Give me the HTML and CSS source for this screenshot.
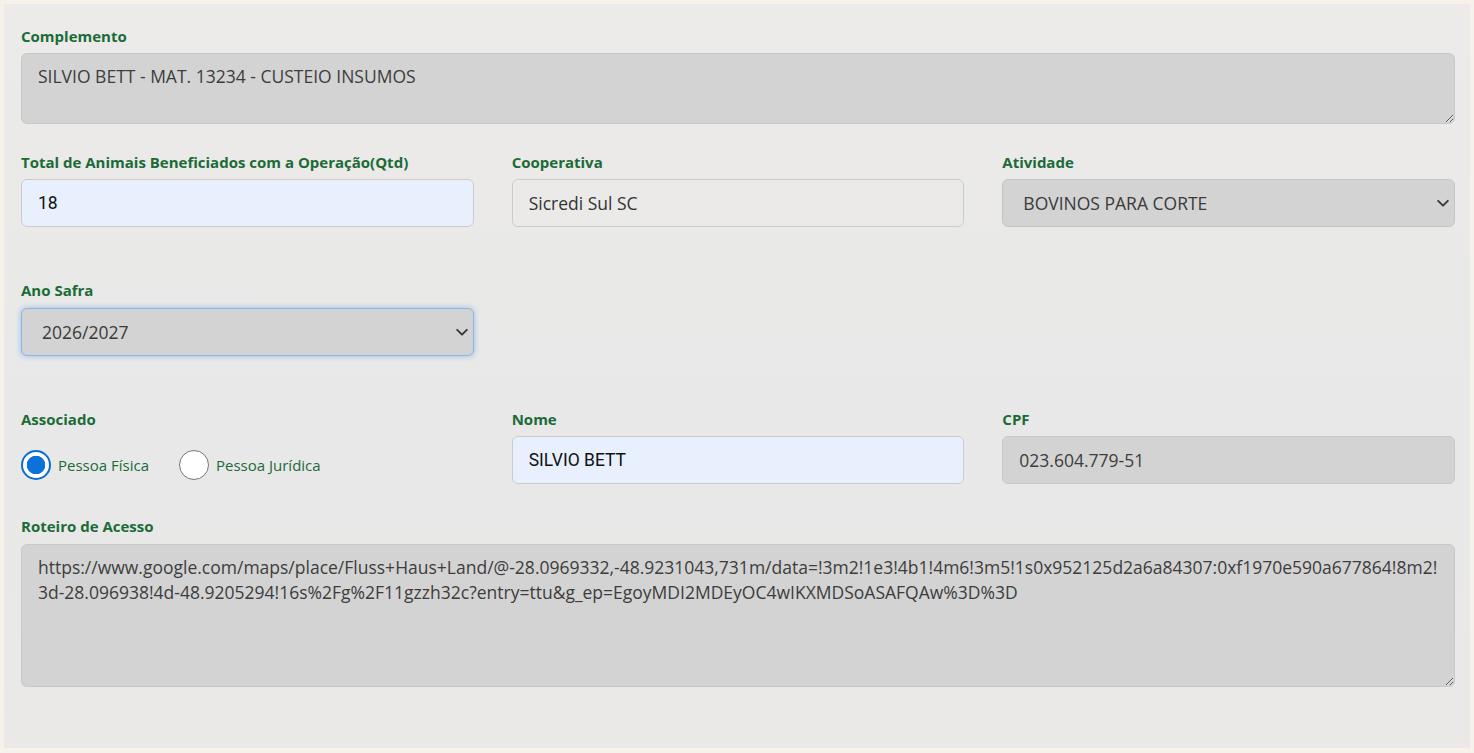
FILE: index.html
```html
<!DOCTYPE html>
<html lang="pt-BR">
  <head>
    <meta charset="UTF-8" />
    <meta name="viewport" content="width=device-width, initial-scale=1.0" />
    <title>Operação</title>
    <link rel="stylesheet" href="styles.css">
  </head>
  <body>
    <div class="panel">
      <div class="group group-complemento">
        <label class="field-label" for="complemento">Complemento</label>
        <textarea id="complemento" class="form-control readonly area-sm" readonly>SILVIO BETT - MAT. 13234 - CUSTEIO INSUMOS</textarea>
      </div>

      <div class="row row-gap-lg">
        <div class="group">
          <label class="field-label" for="animais">Total de Animais Beneficiados com a Operação(Qtd)</label>
          <input type="text" id="animais" class="form-control autofill" value="18" />
        </div>
        <div class="group">
          <label class="field-label" for="cooperativa">Cooperativa</label>
          <input type="text" id="cooperativa" class="form-control" value="Sicredi Sul SC" />
        </div>
        <div class="group">
          <label class="field-label" for="atividade">Atividade</label>
          <div class="select-wrap">
            <select id="atividade" class="form-select">
              <option>BOVINOS PARA CORTE</option>
            </select>
            <svg class="chevron" viewBox="0 0 16 16" width="14" height="14"><path d="M2.5 5.5 8 11l5.5-5.5" fill="none" stroke="#343a40" stroke-width="2.2" stroke-linecap="round" stroke-linejoin="round"/></svg>
          </div>
        </div>
      </div>

      <div class="row row-gap-lg">
        <div class="group">
          <label class="field-label label-safra" for="safra">Ano Safra</label>
          <div class="select-wrap">
            <select id="safra" class="form-select focused">
              <option>2026/2027</option>
            </select>
            <svg class="chevron" viewBox="0 0 16 16" width="14" height="14"><path d="M2.5 5.5 8 11l5.5-5.5" fill="none" stroke="#343a40" stroke-width="2.2" stroke-linecap="round" stroke-linejoin="round"/></svg>
          </div>
        </div>
      </div>

      <div class="row row-gap-md">
        <div class="group">
          <span class="field-label">Associado</span>
          <div class="radios">
            <label class="radio">
              <span class="radio-dot checked"></span>
              Pessoa Física
            </label>
            <label class="radio">
              <span class="radio-dot"></span>
              Pessoa Jurídica
            </label>
          </div>
        </div>
        <div class="group">
          <label class="field-label" for="nome">Nome</label>
          <input type="text" id="nome" class="form-control autofill" value="SILVIO BETT" />
        </div>
        <div class="group">
          <label class="field-label" for="cpf">CPF</label>
          <input type="text" id="cpf" class="form-control readonly" value="023.604.779-51" readonly />
        </div>
      </div>

      <div class="group">
        <label class="field-label label-roteiro" for="roteiro">Roteiro de Acesso</label>
        <textarea id="roteiro" class="form-control readonly area-lg" readonly>https://www.google.com/maps/place/Fluss+Haus+Land/@-28.0969332,-48.9231043,731m/data=!3m2!1e3!4b1!4m6!3m5!1s0x952125d2a6a84307:0xf1970e590a677864!8m2!3d-28.096938!4d-48.9205294!16s%2Fg%2F11gzzh32c?entry=ttu&amp;g_ep=EgoyMDI2MDEyOC4wIKXMDSoASAFQAw%3D%3D</textarea>
      </div>
    </div>
  </body>
</html>
```

FILE: styles.css
```css
body {
  margin: 0;
  font-family: "Open Sans", "Noto Sans", sans-serif;
  background-color: #f6f2ea;
}
.panel {
  margin: 4px;
  height: 744px;
  box-sizing: border-box;
  padding: 22px 15px 0 17px;
  background: linear-gradient(180deg, #ecebe9 0%, #e8e8e8 60%, #eae9e7 100%);
}
.field-label {
  display: block;
  font-size: 15px;
  line-height: 20px;
  font-weight: 700;
  color: #1b6b37;
  margin-bottom: 7px;
}
.label-safra,
.label-roteiro {
  margin-bottom: 8px;
}
.group-complemento {
  margin-bottom: 28px;
}
.row {
  display: grid;
  grid-template-columns: repeat(3, 1fr);
  column-gap: 38px;
}
.row-gap-lg {
  margin-bottom: 53px;
}
.row-gap-md {
  margin-bottom: 32px;
}
.form-control {
  display: block;
  width: 100%;
  box-sizing: border-box;
  height: 48px;
  padding: 0 16px;
  font-family: "Open Sans", sans-serif;
  font-size: 17.5px;
  color: #333;
  background-color: transparent;
  border: 1px solid #cbcbcb;
  border-radius: 6px;
  outline: none;
}
.autofill {
  background-color: #e8f0fe;
  font-family: Roboto, "Liberation Sans", sans-serif;
  color: #111;
}
.readonly {
  background-color: #d3d3d3;
  color: #3d3d3d;
  border-color: #c8c8c8;
}
textarea.form-control {
  padding: 10px 16px;
  line-height: 25px;
  overflow: hidden;
  overflow-wrap: break-word;
}
.area-sm {
  height: 71px;
}
.area-lg {
  height: 143px;
  padding-top: 9px;
}
.select-wrap {
  position: relative;
}
.form-select {
  display: block;
  width: 100%;
  height: 48px;
  box-sizing: border-box;
  padding: 0 40px 0 20px;
  font-family: "Open Sans", sans-serif;
  font-size: 17.5px;
  color: #3a3a3a;
  background-color: #d3d3d3;
  border: 1px solid #c6c6c6;
  border-radius: 6px;
  appearance: none;
  -webkit-appearance: none;
  outline: none;
}
.form-select.focused {
  border-color: #8db6e8;
  box-shadow: 0 0 5px 1px rgba(120, 170, 235, 0.55);
}
.chevron {
  position: absolute;
  right: 5px;
  top: 17px;
  pointer-events: none;
}
.radios {
  display: flex;
  align-items: center;
  height: 48px;
  box-sizing: border-box;
  padding-top: 10px;
}
.radio {
  display: flex;
  align-items: center;
  gap: 7px;
  margin-right: 30px;
  font-size: 15px;
  color: #1b6b37;
}
.radio-dot {
  width: 30px;
  height: 30px;
  box-sizing: border-box;
  border-radius: 50%;
  border: 1px solid #767676;
  background: #fff;
}
.radio-dot.checked {
  border: 2px solid #0a6ed1;
  background: radial-gradient(circle, #0a72d9 0 9px, #fff 9.5px);
}
```
